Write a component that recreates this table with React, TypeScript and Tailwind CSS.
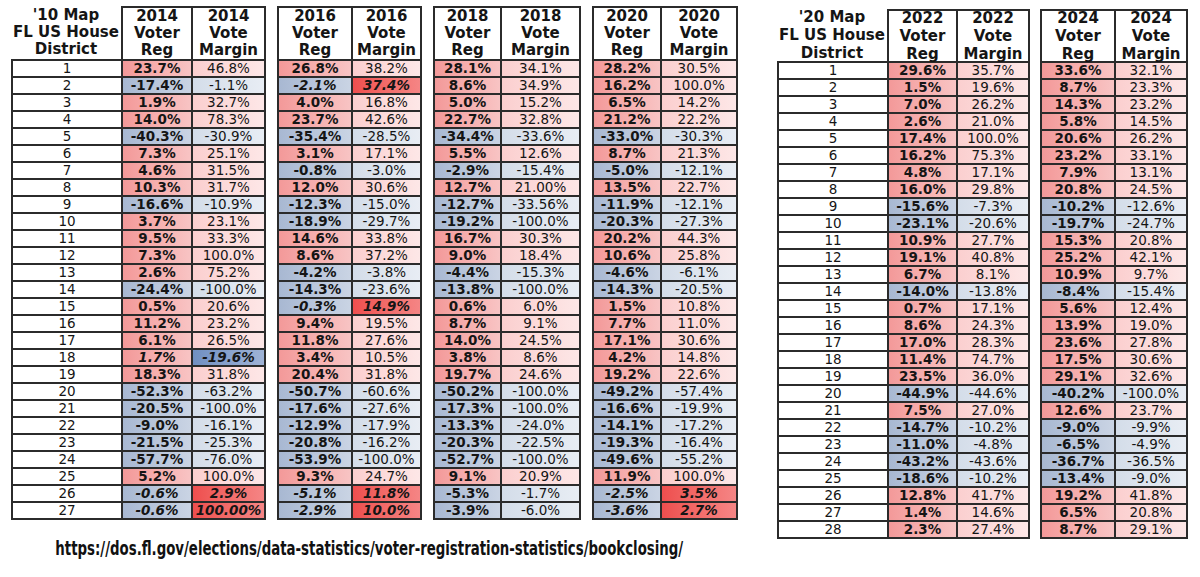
const LINE = "border-[#2b2b2b]";

// values: "*" prefix marks a cell where reg and margin disagree (italic, strong margin fill)
const LEFT_ROWS: string[][] = [
  ["23.7%", "46.8%", "26.8%", "38.2%", "28.1%", "34.1%", "28.2%", "30.5%"],
  ["-17.4%", "-1.1%", "*-2.1%", "*37.4%", "8.6%", "34.9%", "16.2%", "100.0%"],
  ["1.9%", "32.7%", "4.0%", "16.8%", "5.0%", "15.2%", "6.5%", "14.2%"],
  ["14.0%", "78.3%", "23.7%", "42.6%", "22.7%", "32.8%", "21.2%", "22.2%"],
  ["-40.3%", "-30.9%", "-35.4%", "-28.5%", "-34.4%", "-33.6%", "-33.0%", "-30.3%"],
  ["7.3%", "25.1%", "3.1%", "17.1%", "5.5%", "12.6%", "8.7%", "21.3%"],
  ["4.6%", "31.5%", "-0.8%", "-3.0%", "-2.9%", "-15.4%", "-5.0%", "-12.1%"],
  ["10.3%", "31.7%", "12.0%", "30.6%", "12.7%", "21.00%", "13.5%", "22.7%"],
  ["-16.6%", "-10.9%", "-12.3%", "-15.0%", "-12.7%", "-33.56%", "-11.9%", "-12.1%"],
  ["3.7%", "23.1%", "-18.9%", "-29.7%", "-19.2%", "-100.0%", "-20.3%", "-27.3%"],
  ["9.5%", "33.3%", "14.6%", "33.8%", "16.7%", "30.3%", "20.2%", "44.3%"],
  ["7.3%", "100.0%", "8.6%", "37.2%", "9.0%", "18.4%", "10.6%", "25.8%"],
  ["2.6%", "75.2%", "-4.2%", "-3.8%", "-4.4%", "-15.3%", "-4.6%", "-6.1%"],
  ["-24.4%", "-100.0%", "-14.3%", "-23.6%", "-13.8%", "-100.0%", "-14.3%", "-20.5%"],
  ["0.5%", "20.6%", "*-0.3%", "*14.9%", "0.6%", "6.0%", "1.5%", "10.8%"],
  ["11.2%", "23.2%", "9.4%", "19.5%", "8.7%", "9.1%", "7.7%", "11.0%"],
  ["6.1%", "26.5%", "11.8%", "27.6%", "14.0%", "24.5%", "17.1%", "30.6%"],
  ["*1.7%", "*-19.6%", "3.4%", "10.5%", "3.8%", "8.6%", "4.2%", "14.8%"],
  ["18.3%", "31.8%", "20.4%", "31.8%", "19.7%", "24.6%", "19.2%", "22.6%"],
  ["-52.3%", "-63.2%", "-50.7%", "-60.6%", "-50.2%", "-100.0%", "-49.2%", "-57.4%"],
  ["-20.5%", "-100.0%", "-17.6%", "-27.6%", "-17.3%", "-100.0%", "-16.6%", "-19.9%"],
  ["-9.0%", "-16.1%", "-12.9%", "-17.9%", "-13.3%", "-24.0%", "-14.1%", "-17.2%"],
  ["-21.5%", "-25.3%", "-20.8%", "-16.2%", "-20.3%", "-22.5%", "-19.3%", "-16.4%"],
  ["-57.7%", "-76.0%", "-53.9%", "-100.0%", "-52.7%", "-100.0%", "-49.6%", "-55.2%"],
  ["5.2%", "100.0%", "9.3%", "24.7%", "9.1%", "20.9%", "11.9%", "100.0%"],
  ["*-0.6%", "*2.9%", "*-5.1%", "*11.8%", "-5.3%", "-1.7%", "*-2.5%", "*3.5%"],
  ["*-0.6%", "*100.00%", "*-2.9%", "*10.0%", "-3.9%", "-6.0%", "*-3.6%", "*2.7%"],
];

const RIGHT_ROWS: string[][] = [
  ["29.6%", "35.7%", "33.6%", "32.1%"],
  ["1.5%", "19.6%", "8.7%", "23.3%"],
  ["7.0%", "26.2%", "14.3%", "23.2%"],
  ["2.6%", "21.0%", "5.8%", "14.5%"],
  ["17.4%", "100.0%", "20.6%", "26.2%"],
  ["16.2%", "75.3%", "23.2%", "33.1%"],
  ["4.8%", "17.1%", "7.9%", "13.1%"],
  ["16.0%", "29.8%", "20.8%", "24.5%"],
  ["-15.6%", "-7.3%", "-10.2%", "-12.6%"],
  ["-23.1%", "-20.6%", "-19.7%", "-24.7%"],
  ["10.9%", "27.7%", "15.3%", "20.8%"],
  ["19.1%", "40.8%", "25.2%", "42.1%"],
  ["6.7%", "8.1%", "10.9%", "9.7%"],
  ["-14.0%", "-13.8%", "-8.4%", "-15.4%"],
  ["0.7%", "17.1%", "5.6%", "12.4%"],
  ["8.6%", "24.3%", "13.9%", "19.0%"],
  ["17.0%", "28.3%", "23.6%", "27.8%"],
  ["11.4%", "74.7%", "17.5%", "30.6%"],
  ["23.5%", "36.0%", "29.1%", "32.6%"],
  ["-44.9%", "-44.6%", "-40.2%", "-100.0%"],
  ["7.5%", "27.0%", "12.6%", "23.7%"],
  ["-14.7%", "-10.2%", "-9.0%", "-9.9%"],
  ["-11.0%", "-4.8%", "-6.5%", "-4.9%"],
  ["-43.2%", "-43.6%", "-36.7%", "-36.5%"],
  ["-18.6%", "-10.2%", "-13.4%", "-9.0%"],
  ["12.8%", "41.7%", "19.2%", "41.8%"],
  ["1.4%", "14.6%", "6.5%", "20.8%"],
  ["2.3%", "27.4%", "8.7%", "29.1%"],
];

const RED_REG = "bg-linear-to-r from-[#f39999] to-[#f8c4c4]";
const BLUE_REG = "bg-linear-to-r from-[#a8b8d2] to-[#cad4e4]";
const RED_MARGIN = "bg-linear-to-r from-[#fbcfcf] to-[#fde7e7]";
const BLUE_MARGIN = "bg-linear-to-r from-[#d4dde9] to-[#e8edf4]";
const RED_STRONG = "bg-linear-to-r from-[#ee4e4e] to-[#f58585]";
const BLUE_STRONG = "bg-linear-to-r from-[#7190c2] to-[#9fb3d6]";

function Value({ v, kind, className }: { v: string; kind: "reg" | "margin"; className: string }) {
  const em = v.startsWith("*");
  const val = em ? v.slice(1) : v;
  const neg = val.startsWith("-");
  let fill: string;
  if (kind === "reg") fill = neg ? BLUE_REG : RED_REG;
  else if (em) fill = neg ? BLUE_STRONG : RED_STRONG;
  else fill = neg ? BLUE_MARGIN : RED_MARGIN;
  const bold = kind === "reg" || em;
  return (
    <div
      className={`${className} ${fill} flex items-center justify-center whitespace-nowrap text-[13.5px] leading-none ${
        bold ? "font-bold" : "font-normal"
      } ${em ? "italic" : ""}`}
    >
      {val}
    </div>
  );
}

function HeadCell({ lines, className, leading }: { lines: string[]; className: string; leading: string }) {
  return (
    <div className={`${className} flex flex-col items-center justify-center whitespace-nowrap text-[15px] font-bold ${leading}`}>
      {lines.map((l) => (
        <span key={l}>{l}</span>
      ))}
    </div>
  );
}

function YearGroup({
  year,
  regW,
  marW,
  headH,
  leading,
  rows,
}: {
  year: string;
  regW: string;
  marW: string;
  headH: string;
  leading: string;
  rows: string[][];
}) {
  return (
    <div className={`border-x-2 border-t-2 ${LINE} bg-white`}>
      <div className={`flex border-b-2 ${LINE} ${headH}`}>
        <HeadCell className={`${regW} border-r-2 ${LINE}`} leading={leading} lines={[year, "Voter", "Reg"]} />
        <HeadCell className={marW} leading={leading} lines={[year, "Vote", "Margin"]} />
      </div>
      {rows.map((r, i) => (
        <div key={i} className={`flex h-[17px] border-b-2 ${LINE}`}>
          <Value v={r[0]} kind="reg" className={`${regW} border-r-2 ${LINE}`} />
          <Value v={r[1]} kind="margin" className={marW} />
        </div>
      ))}
    </div>
  );
}

function DistrictCol({
  label,
  count,
  headH,
  leading,
}: {
  label: string;
  count: number;
  headH: string;
  leading: string;
}) {
  return (
    <div className="w-[110px]">
      <HeadCell className={headH} leading={leading} lines={[label, "FL US House", "District"]} />
      <div className={`border-l-2 border-t-2 ${LINE} bg-white`}>
        {Array.from({ length: count }, (_, i) => (
          <div
            key={i}
            className={`flex h-[17px] items-center justify-center border-b-2 ${LINE} text-[13.5px] leading-none`}
          >
            {i + 1}
          </div>
        ))}
      </div>
    </div>
  );
}

export default function App() {
  const col = (rows: string[][], k: number) => rows.map((r) => [r[k * 2], r[k * 2 + 1]]);

  return (
    <div className="flex h-[577px] w-[1200px] items-start overflow-hidden bg-white font-['DejaVu_Sans',sans-serif] text-[#151515]">
      <div className="ml-[11px] mt-[6px] flex w-[727px] shrink-0 flex-col">
        <div className="flex items-start gap-[11px]">
          <div className="flex items-start">
            <DistrictCol label="'10 Map" count={27} headH="h-[53px]" leading="leading-[17px]" />
            <YearGroup year="2014" regW="w-[70px]" marW="w-[71px]" headH="h-[53px]" leading="leading-[17px]" rows={col(LEFT_ROWS, 0)} />
          </div>
          <YearGroup year="2016" regW="w-[74px]" marW="w-[67px]" headH="h-[53px]" leading="leading-[17px]" rows={col(LEFT_ROWS, 1)} />
          <YearGroup year="2018" regW="w-[67px]" marW="w-[77px]" headH="h-[53px]" leading="leading-[17px]" rows={col(LEFT_ROWS, 2)} />
          <YearGroup year="2020" regW="w-[68px]" marW="w-[74px]" headH="h-[53px]" leading="leading-[17px]" rows={col(LEFT_ROWS, 3)} />
        </div>
        <div className="mt-[13px] flex justify-center pr-[11px]">
          <span className="shrink-0 scale-x-[0.74] whitespace-nowrap font-['DejaVu_Sans_Condensed','DejaVu_Sans',sans-serif] text-[20px] font-bold text-[#111]">
            https://dos.fl.gov/elections/data-statistics/voter-registration-statistics/bookclosing/
          </span>
        </div>
      </div>

      <div className="ml-[39px] mt-[9px] flex shrink-0 items-start gap-[10px]">
        <div className="flex items-start">
          <DistrictCol label="'20 Map" count={28} headH="h-[52px]" leading="leading-[18px]" />
          <YearGroup year="2022" regW="w-[69px]" marW="w-[70px]" headH="h-[52px]" leading="leading-[18px]" rows={col(RIGHT_ROWS, 0)} />
        </div>
        <YearGroup year="2024" regW="w-[74px]" marW="w-[70px]" headH="h-[52px]" leading="leading-[18px]" rows={col(RIGHT_ROWS, 1)} />
      </div>
    </div>
  );
}
